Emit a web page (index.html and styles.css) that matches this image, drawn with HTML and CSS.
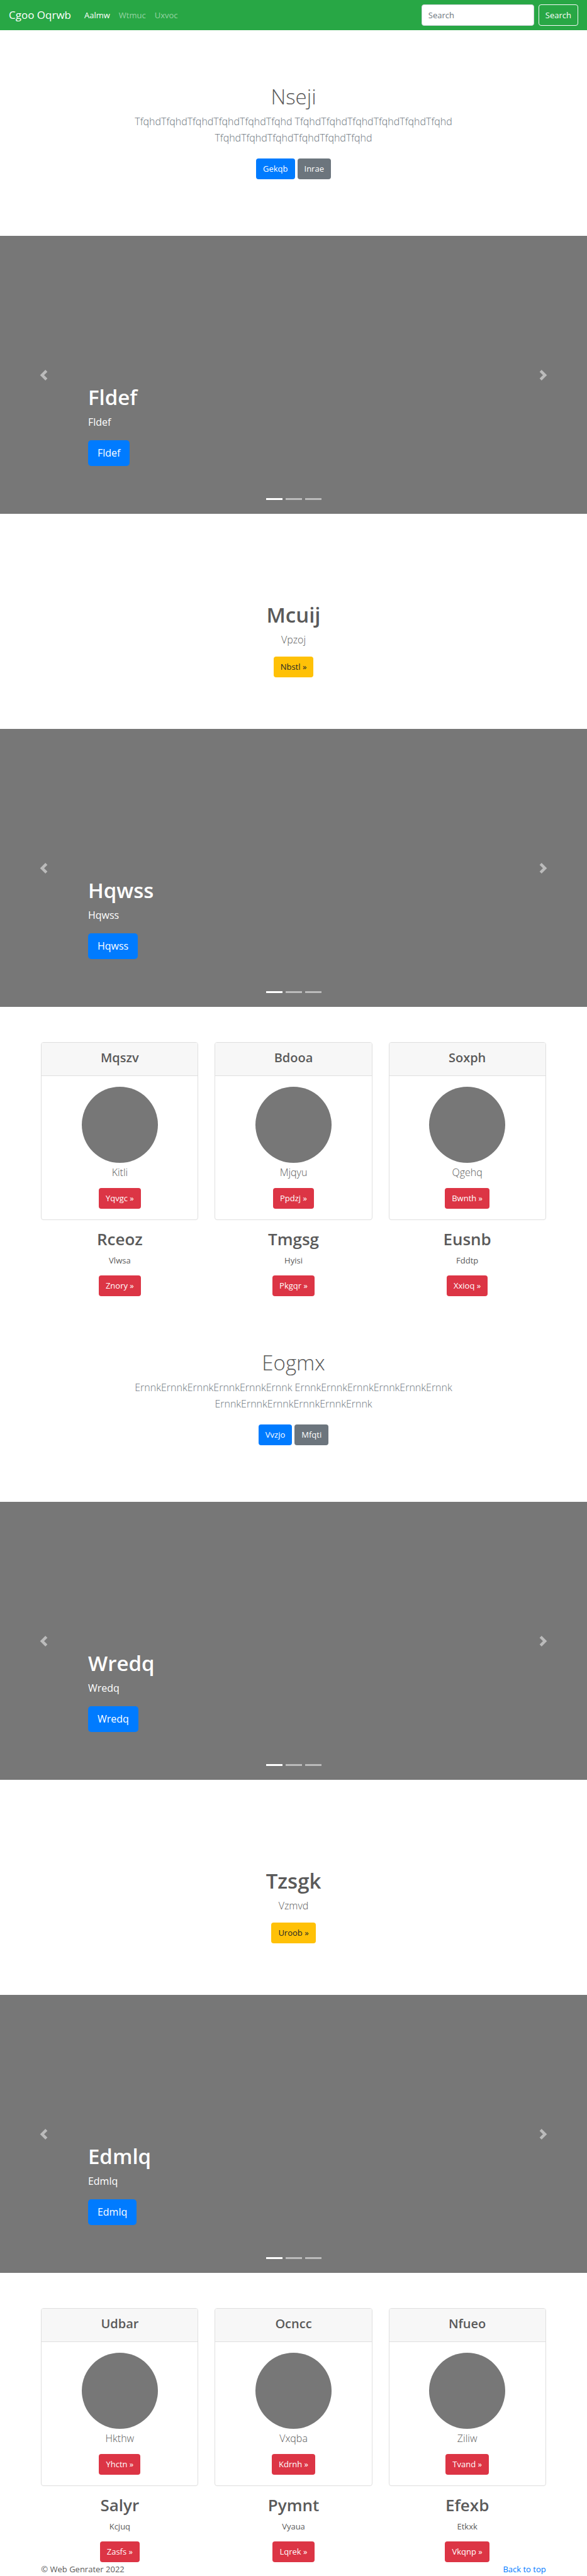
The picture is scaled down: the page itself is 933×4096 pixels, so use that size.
FILE: index.html
```html
<!DOCTYPE html>
<html lang="en">
<head>
<meta charset="utf-8">
<meta name="viewport" content="width=device-width, initial-scale=1">
<title>Cgoo Oqrwb</title>
<link rel="stylesheet" href="styles.css">
</head>
<body id="top">
<header class="navbar">
  <a class="brand" href="#">Cgoo Oqrwb</a>
  <nav class="nav">
    <a class="nav-link active" href="#">Aalmw</a>
    <a class="nav-link" href="#">Wtmuc</a>
    <a class="nav-link" href="#">Uxvoc</a>
  </nav>
  <form class="search">
    <input class="search-input" type="search" placeholder="Search" aria-label="Search">
    <button class="btn btn-outline" type="button">Search</button>
  </form>
</header>
<main>
  <section class="hero">
    <h1 class="display light">Nseji</h1>
    <p class="lead muted">TfqhdTfqhdTfqhdTfqhdTfqhdTfqhd TfqhdTfqhdTfqhdTfqhdTfqhdTfqhd TfqhdTfqhdTfqhdTfqhdTfqhdTfqhd</p>
    <div class="actions"><a class="btn btn-primary" href="#">Gekqb</a><a class="btn btn-secondary" href="#">Inrae</a></div>
  </section>

  <section class="carousel">
    <div class="caption">
      <h1 class="display">Fldef</h1>
      <p class="caption-text">Fldef</p>
      <a class="btn btn-primary btn-lg" href="#">Fldef</a>
    </div>
    <button class="control prev" type="button" aria-label="Previous"><svg class="arrow" viewBox="0 0 8 8"><path d="M5.25 0l-4 4 4 4 1.5-1.5L4.25 4l2.5-2.5L5.25 0z"/></svg></button>
    <button class="control next" type="button" aria-label="Next"><svg class="arrow" viewBox="0 0 8 8"><path d="M2.75 0l-1.5 1.5L3.75 4l-2.5 2.5L2.75 8l4-4-4-4z"/></svg></button>
    <ol class="indicators"><li class="dot on"></li><li class="dot"></li><li class="dot"></li></ol>
  </section>

  <section class="intro">
    <h1 class="display">Mcuij</h1>
    <p class="lead">Vpzoj</p>
    <a class="btn btn-warning" href="#">Nbstl »</a>
  </section>

  <section class="carousel">
    <div class="caption">
      <h1 class="display">Hqwss</h1>
      <p class="caption-text">Hqwss</p>
      <a class="btn btn-primary btn-lg" href="#">Hqwss</a>
    </div>
    <button class="control prev" type="button" aria-label="Previous"><svg class="arrow" viewBox="0 0 8 8"><path d="M5.25 0l-4 4 4 4 1.5-1.5L4.25 4l2.5-2.5L5.25 0z"/></svg></button>
    <button class="control next" type="button" aria-label="Next"><svg class="arrow" viewBox="0 0 8 8"><path d="M2.75 0l-1.5 1.5L3.75 4l-2.5 2.5L2.75 8l4-4-4-4z"/></svg></button>
    <ol class="indicators"><li class="dot on"></li><li class="dot"></li><li class="dot"></li></ol>
  </section>

  <section class="container columns">
    <div class="column">
      <article class="card">
        <h4 class="card-header">Mqszv</h4>
        <div class="card-body"><div class="avatar"></div><p class="lead">Kitli</p><a class="btn btn-danger" href="#">Yqvgc »</a></div>
      </article>
      <h2 class="column-title">Rceoz</h2><p class="column-text">Vlwsa</p><a class="btn btn-danger" href="#">Znory »</a>
    </div>
    <div class="column">
      <article class="card">
        <h4 class="card-header">Bdooa</h4>
        <div class="card-body"><div class="avatar"></div><p class="lead">Mjqyu</p><a class="btn btn-danger" href="#">Ppdzj »</a></div>
      </article>
      <h2 class="column-title">Tmgsg</h2><p class="column-text">Hyisi</p><a class="btn btn-danger" href="#">Pkgqr »</a>
    </div>
    <div class="column">
      <article class="card">
        <h4 class="card-header">Soxph</h4>
        <div class="card-body"><div class="avatar"></div><p class="lead">Qgehq</p><a class="btn btn-danger" href="#">Bwnth »</a></div>
      </article>
      <h2 class="column-title">Eusnb</h2><p class="column-text">Fddtp</p><a class="btn btn-danger" href="#">Xxioq »</a>
    </div>
  </section>

  <section class="hero">
    <h1 class="display light">Eogmx</h1>
    <p class="lead muted">ErnnkErnnkErnnkErnnkErnnkErnnk ErnnkErnnkErnnkErnnkErnnkErnnk ErnnkErnnkErnnkErnnkErnnkErnnk</p>
    <div class="actions"><a class="btn btn-primary" href="#">Vvzjo</a><a class="btn btn-secondary" href="#">Mfqti</a></div>
  </section>

  <section class="carousel">
    <div class="caption">
      <h1 class="display">Wredq</h1>
      <p class="caption-text">Wredq</p>
      <a class="btn btn-primary btn-lg" href="#">Wredq</a>
    </div>
    <button class="control prev" type="button" aria-label="Previous"><svg class="arrow" viewBox="0 0 8 8"><path d="M5.25 0l-4 4 4 4 1.5-1.5L4.25 4l2.5-2.5L5.25 0z"/></svg></button>
    <button class="control next" type="button" aria-label="Next"><svg class="arrow" viewBox="0 0 8 8"><path d="M2.75 0l-1.5 1.5L3.75 4l-2.5 2.5L2.75 8l4-4-4-4z"/></svg></button>
    <ol class="indicators"><li class="dot on"></li><li class="dot"></li><li class="dot"></li></ol>
  </section>

  <section class="intro">
    <h1 class="display">Tzsgk</h1>
    <p class="lead">Vzmvd</p>
    <a class="btn btn-warning" href="#">Uroob »</a>
  </section>

  <section class="carousel">
    <div class="caption">
      <h1 class="display">Edmlq</h1>
      <p class="caption-text">Edmlq</p>
      <a class="btn btn-primary btn-lg" href="#">Edmlq</a>
    </div>
    <button class="control prev" type="button" aria-label="Previous"><svg class="arrow" viewBox="0 0 8 8"><path d="M5.25 0l-4 4 4 4 1.5-1.5L4.25 4l2.5-2.5L5.25 0z"/></svg></button>
    <button class="control next" type="button" aria-label="Next"><svg class="arrow" viewBox="0 0 8 8"><path d="M2.75 0l-1.5 1.5L3.75 4l-2.5 2.5L2.75 8l4-4-4-4z"/></svg></button>
    <ol class="indicators"><li class="dot on"></li><li class="dot"></li><li class="dot"></li></ol>
  </section>

  <section class="container columns">
    <div class="column">
      <article class="card">
        <h4 class="card-header">Udbar</h4>
        <div class="card-body"><div class="avatar"></div><p class="lead">Hkthw</p><a class="btn btn-danger" href="#">Yhctn »</a></div>
      </article>
      <h2 class="column-title">Salyr</h2><p class="column-text">Kcjuq</p><a class="btn btn-danger" href="#">Zasfs »</a>
    </div>
    <div class="column">
      <article class="card">
        <h4 class="card-header">Ocncc</h4>
        <div class="card-body"><div class="avatar"></div><p class="lead">Vxqba</p><a class="btn btn-danger" href="#">Kdrnh »</a></div>
      </article>
      <h2 class="column-title">Pymnt</h2><p class="column-text">Vyaua</p><a class="btn btn-danger" href="#">Lqrek »</a>
    </div>
    <div class="column">
      <article class="card">
        <h4 class="card-header">Nfueo</h4>
        <div class="card-body"><div class="avatar"></div><p class="lead">Ziliw</p><a class="btn btn-danger" href="#">Tvand »</a></div>
      </article>
      <h2 class="column-title">Efexb</h2><p class="column-text">Etkxk</p><a class="btn btn-danger" href="#">Vkqnp »</a>
    </div>
  </section>
</main>
<footer class="container footer">
  <span>© Web Genrater 2022</span>
  <a class="top-link" href="#top">Back to top</a>
</footer>
</body>
</html>
```
FILE: styles.css
```css
* {
  box-sizing: border-box;
}

body {
  margin: 0;
  background: #fff;
  color: #5a5a5a;
  font: 400 13px/21px "Open Sans", "Noto Sans", sans-serif;
}

h1, h2, h4, p, ol {
  margin: 0;
  padding: 0;
}

a {
  text-decoration: none;
}

.navbar {
  display: flex;
  align-items: center;
  padding: 7px 14px;
  background: #28a745;
}

.brand {
  margin-right: 21px;
  color: #fff;
  font-size: 17px;
  line-height: 26px;
}

.nav {
  display: flex;
  gap: 14px;
  margin-right: auto;
}

.nav-link {
  color: rgba(255, 255, 255, .5);
}

.nav-link.active {
  color: #fff;
}

.search {
  display: flex;
  gap: 7px;
}

.search-input {
  width: 179px;
  height: 34px;
  padding: 5px 10px;
  border: 1px solid #ced4da;
  border-radius: 4px;
  background: #fff;
  color: #495057;
  font: inherit;
}

.search-input::placeholder {
  color: #6c757d;
  opacity: 1;
}

.btn {
  display: inline-block;
  padding: 5px 10px;
  border: 1px solid transparent;
  border-radius: 4px;
  color: #fff;
  font: inherit;
  vertical-align: top;
}

.btn-outline {
  border-color: #f8f9fa;
  background: transparent;
}

.btn-primary {
  background: #007bff;
}

.btn-secondary {
  background: #6c757d;
}

.btn-warning {
  background: #ffc107;
  color: #212529;
}

.btn-danger {
  background: #dc3545;
}

.btn-lg {
  padding: 7px 14px;
  border-radius: 5px;
  font-size: 16px;
  line-height: 25px;
}

.display {
  margin-bottom: 6px;
  font-size: 33px;
  font-weight: 600;
  line-height: 41px;
}

.display.light {
  font-weight: 300;
}

.lead {
  margin-bottom: 14px;
  font-size: 16px;
  font-weight: 300;
  line-height: 26px;
}

.muted {
  color: #6c757d;
}

.hero {
  display: flex;
  flex-direction: column;
  align-items: center;
  padding: 85px 14px 90px;
  text-align: center;
}

.hero .lead {
  max-width: 528px;
  margin-bottom: 20px;
}

.actions {
  display: flex;
  gap: 4px;
}

.carousel {
  position: relative;
  display: flex;
  flex-direction: column;
  justify-content: flex-end;
  min-height: 442px;
  padding: 0 15% 76px;
  background: #777;
  color: #fff;
}

.caption-text {
  margin-bottom: 16px;
  font-size: 16px;
  line-height: 26px;
}

.control {
  position: absolute;
  top: 0;
  bottom: 0;
  display: flex;
  align-items: center;
  justify-content: center;
  width: 15%;
  padding: 0;
  border: 0;
  background: none;
  opacity: .5;
}

.prev {
  left: 0;
}

.next {
  right: 0;
}

.arrow {
  width: 17px;
  height: 17px;
  fill: #fff;
}

.indicators {
  position: absolute;
  right: 15%;
  bottom: 22px;
  left: 15%;
  display: flex;
  justify-content: center;
  gap: 5px;
  list-style: none;
}

.dot {
  width: 26px;
  height: 3px;
  background: #fff;
  opacity: .5;
}

.dot.on {
  opacity: 1;
}

.intro {
  padding: 140px 14px 82px;
  text-align: center;
}

.container {
  width: 86%;
  max-width: 960px;
  margin: 0 auto;
}

.columns {
  display: grid;
  grid-template-columns: repeat(3, 1fr);
  gap: 26px;
  padding-top: 56px;
  text-align: center;
}

.card {
  margin-bottom: 14px;
  border: 1px solid #dfdfdf;
  border-radius: 4px;
}

.card-header {
  padding: 11px 17px 16px;
  border-bottom: 1px solid #dfdfdf;
  border-radius: 3px 3px 0 0;
  background: #f7f7f7;
  font-size: 20px;
  font-weight: 600;
  line-height: 25px;
}

.card-body {
  padding: 17px;
}

.avatar {
  width: 121px;
  height: 121px;
  margin: 0 auto 2px;
  border-radius: 50%;
  background: #777;
}

.card .lead {
  margin-bottom: 12px;
}

.column-title {
  margin-bottom: 7px;
  font-size: 26px;
  font-weight: 600;
  line-height: 33px;
}

.column-text {
  margin-bottom: 13px;
}

.footer {
  display: flex;
  justify-content: space-between;
  line-height: 22px;
}

.top-link {
  color: #007bff;
}
```
